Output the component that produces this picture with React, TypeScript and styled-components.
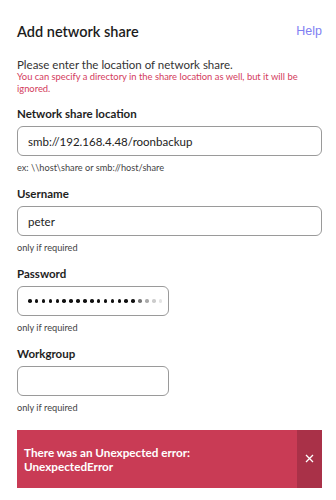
import { createGlobalStyle } from "styled-components";
import styled from "styled-components";

const Global = createGlobalStyle`
  body {
    margin: 0;
    background: #fff;
    font-family: Lato, "Open Sans", sans-serif;
    color: #222;
  }
`;

const Page = styled.div`
  width: 336px;
  padding: 20px 14px 0 17px;
  box-sizing: border-box;
`;

const Header = styled.div`
  display: flex;
  justify-content: space-between;
  align-items: center;
  height: 22px;
`;

const Title = styled.h1`
  margin: 0;
  font-size: 14.5px;
  font-weight: 600;
  color: #1c1c1c;
`;

const HelpLink = styled.a`
  font-family: "Liberation Sans", Arial, sans-serif;
  font-size: 12.5px;
  color: #7f7ff2;
  text-decoration: none;
`;

const Intro = styled.p`
  margin: 17px 0 0;
  font-size: 11.5px;
  line-height: 12px;
  color: #333;
`;

const Warning = styled.p`
  margin: 0;
  font-size: 9.4px;
  line-height: 11.5px;
  color: #d33c5d;
`;

const Field = styled.div`
  display: flex;
  flex-direction: column;
  margin-top: 12.5px;
`;

const Label = styled.label`
  font-size: 11.5px;
  font-weight: 700;
  color: #1e1e1e;
  line-height: 13px;
`;

const Input = styled.input<{ $short?: boolean }>`
  box-sizing: border-box;
  margin-top: 6.5px;
  height: 30px;
  width: ${(p) => (p.$short ? "152px" : "305px")};
  border: 1px solid #9a9a9a;
  border-radius: 6px;
  padding: 0 10px;
  font-family: Lato, sans-serif;
  font-size: 11.5px;
  color: #222;
  outline: none;
  background: #fff;
`;

const Hint = styled.div`
  margin-top: 6px;
  font-size: 9.2px;
  line-height: 12px;
  color: #444;
`;

const Dots = styled.div`
  box-sizing: border-box;
  margin-top: 6.5px;
  height: 30px;
  width: 152px;
  border: 1px solid #9a9a9a;
  border-radius: 6px;
  padding: 0 0 0 10px;
  display: flex;
  align-items: center;
  gap: 3.4px;
`;

const Dot = styled.span<{ $shade: string }>`
  width: 3.5px;
  height: 3.5px;
  border-radius: 50%;
  background: ${(p) => p.$shade};
`;

const Banner = styled.div`
  display: flex;
  margin-top: 15.5px;
  width: 305px;
  height: 58px;
  background: #c93b55;
  color: #fff;
`;

const BannerText = styled.div`
  flex: 1;
  display: flex;
  align-items: center;
  padding-left: 7px;
  font-size: 11.7px;
  font-weight: 700;
  line-height: 14px;
`;

const Close = styled.button`
  width: 25px;
  border: none;
  background: #a93148;
  color: #fff;
  display: flex;
  align-items: center;
  justify-content: center;
  padding: 0;
`;

const shades = [
  ...Array(16).fill("#111"),
  "#777",
  "#aaa",
  "#ccc",
  "#e4e4e4",
];

export default function App() {
  return (
    <>
      <Global />
      <Page>
        <Header>
          <Title>Add network share</Title>
          <HelpLink href="#">Help</HelpLink>
        </Header>
        <Intro>Please enter the location of network share.</Intro>
        <Warning>
          You can specify a directory in the share location as well, but it will be ignored.
        </Warning>

        <Field>
          <Label>Network share location</Label>
          <Input defaultValue="smb://192.168.4.48/roonbackup" />
          <Hint>ex: \\host\share or smb://host/share</Hint>
        </Field>

        <Field>
          <Label>Username</Label>
          <Input defaultValue="peter" />
          <Hint>only if required</Hint>
        </Field>

        <Field>
          <Label>Password</Label>
          <Dots>
            {shades.map((s, i) => (
              <Dot key={i} $shade={s} />
            ))}
          </Dots>
          <Hint>only if required</Hint>
        </Field>

        <Field>
          <Label>Workgroup</Label>
          <Input $short defaultValue="" />
          <Hint>only if required</Hint>
        </Field>

        <Banner>
          <BannerText>
            There was an Unexpected error:
            <br />
            UnexpectedError
          </BannerText>
          <Close aria-label="close">
            <svg width="9" height="9" viewBox="0 0 9 9">
              <path d="M1 1L8 8M8 1L1 8" stroke="#fff" strokeWidth="1.3" />
            </svg>
          </Close>
        </Banner>
      </Page>
    </>
  );
}
